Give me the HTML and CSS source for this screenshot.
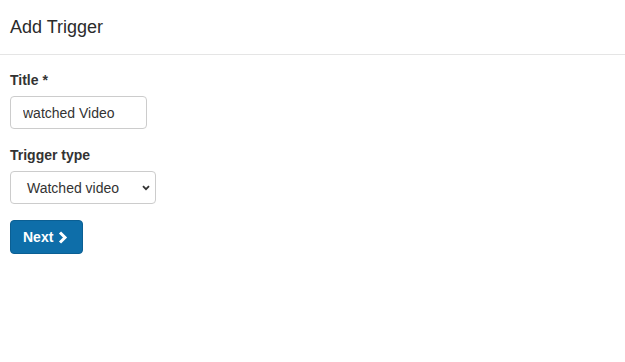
FILE: index.html
```html
<!DOCTYPE html>
<html>
<head>
<meta charset="utf-8">
<link rel="stylesheet" href="styles.css">
</head>
<body>
<header class="modal-header">
  <h1 class="modal-title">Add Trigger</h1>
</header>
<form class="form">
  <div class="group">
    <label class="label" for="title">Title *</label>
    <input class="input" id="title" type="text" value="watched Video">
  </div>
  <div class="group">
    <label class="label" for="type">Trigger type</label>
    <div class="select">
      <span class="select-value">Watched video</span>
      <svg class="select-arrow" width="8" height="6" viewBox="0 0 8 6"><path d="M1 1.2 L4 4.2 L7 1.2" fill="none" stroke="#333" stroke-width="1.8"/></svg>
    </div>
  </div>
  <button class="btn" type="button">Next
    <svg class="chev" width="10" height="13" viewBox="0 0 10 13"><path d="M2 1.5 L7 6.5 L2 11.5" fill="none" stroke="#fff" stroke-width="3"/></svg>
  </button>
</form>
</body>
</html>
```
FILE: styles.css
```css
html, body {
  margin: 0;
  background: #fff;
  font-family: "Liberation Sans", Arial, sans-serif;
  color: #333;
}
.modal-header {
  height: 54px;
  padding: 0 10px;
  display: flex;
  align-items: center;
  border-bottom: 1px solid #e5e5e5;
}
.modal-title {
  margin: 0;
  font-size: 18px;
  font-weight: normal;
  color: #2b2b2b;
}
.form {
  padding: 15px 10px;
  display: flex;
  flex-direction: column;
  align-items: flex-start;
  gap: 16px;
}
.group {
  display: flex;
  flex-direction: column;
  align-items: flex-start;
  gap: 6px;
}
.label {
  font-size: 14px;
  font-weight: bold;
  line-height: 20px;
  color: #333;
}
.input {
  box-sizing: border-box;
  width: 137px;
  height: 33px;
  padding: 0 12px;
  border: 1px solid #ccc;
  border-radius: 4px;
  font-family: inherit;
  font-size: 14px;
  color: #333;
  margin: 0;
  outline: none;
}
.select {
  box-sizing: border-box;
  width: 146px;
  height: 33px;
  padding: 0 5px 0 16px;
  border: 1px solid #ccc;
  border-radius: 4px;
  display: flex;
  align-items: center;
  justify-content: space-between;
  font-size: 14px;
  color: #333;
}
.select-arrow {
  display: block;
}
.btn {
  box-sizing: border-box;
  height: 34px;
  width: 73px;
  padding: 0 0 0 12px;
  display: flex;
  align-items: center;
  gap: 5px;
  background: #0e6ea9;
  border: 1px solid #0b5f93;
  border-radius: 4px;
  color: #fff;
  font-family: inherit;
  font-size: 14px;
  font-weight: bold;
  margin: 0;
}
.chev {
  display: block;
}
```
